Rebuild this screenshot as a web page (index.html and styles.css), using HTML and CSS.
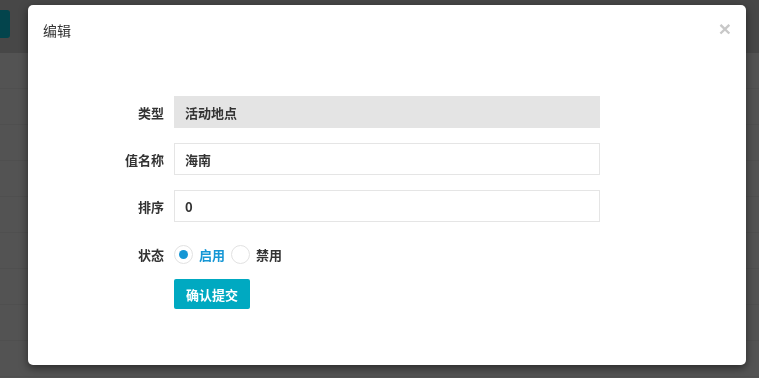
FILE: index.html
```html
<!DOCTYPE html>
<html>
<head>
  <meta charset="utf-8">
  <title>编辑</title>
  <link rel="stylesheet" href="styles.css">
</head>
<body>
  <div class="page">
    <div class="topbar">
      <div class="top-btn"></div>
    </div>
    <div class="list">
      <div class="list-row"></div>
      <div class="list-row"></div>
      <div class="list-row"></div>
      <div class="list-row"></div>
      <div class="list-row"></div>
      <div class="list-row"></div>
      <div class="list-row"></div>
      <div class="list-row"></div>
      <div class="list-row"></div>
    </div>
  </div>

  <div class="modal">
    <div class="modal-header">
      <h4 class="modal-title">编辑</h4>
      <span class="close">×</span>
    </div>
    <form class="form">
      <label class="form-label">类型</label>
      <div class="form-field">
        <input type="text" class="input input-disabled" value="活动地点" disabled>
      </div>

      <label class="form-label">值名称</label>
      <div class="form-field">
        <input type="text" class="input" value="海南">
      </div>

      <label class="form-label">排序</label>
      <div class="form-field">
        <input type="text" class="input" value="0">
      </div>

      <label class="form-label label-status">状态</label>
      <div class="form-field radios">
        <span class="radio checked"></span>
        <span class="radio-text active">启用</span>
        <span class="radio"></span>
        <span class="radio-text">禁用</span>
      </div>

      <div></div>
      <div class="form-field">
        <button type="button" class="btn-submit">确认提交</button>
      </div>
    </form>
  </div>
</body>
</html>
```

FILE: styles.css
```css
body {
  margin: 0;
  font-family: "Noto Sans CJK SC", "Liberation Sans", sans-serif;
  background-color: #535353;
  overflow: hidden;
}
.page {
  height: 378px;
}
.topbar {
  height: 53px;
  background-color: #474747;
  padding-top: 10px;
  box-sizing: border-box;
}
.top-btn {
  width: 10px;
  height: 28px;
  background-color: #03444c;
  border-radius: 0 3px 3px 0;
}
.list-row {
  height: 35px;
  border-bottom: 1px solid #4f4f4f;
}

.modal {
  position: fixed;
  top: 5px;
  left: 28px;
  width: 718px;
  height: 360px;
  background-color: #fff;
  border-radius: 5px;
  box-shadow: 0 3px 9px rgba(0, 0, 0, 0.5);
}
.modal-header {
  position: relative;
  padding: 15px;
}
.modal-title {
  margin: 0;
  font-size: 14px;
  font-weight: normal;
  line-height: 20px;
  color: #333;
}
.close {
  position: absolute;
  top: 14px;
  right: 15px;
  font-family: "Liberation Sans", sans-serif;
  font-size: 21px;
  font-weight: bold;
  line-height: 20px;
  color: #c8c8c8;
}

.form {
  display: grid;
  grid-template-columns: 136px 426px;
  column-gap: 10px;
  row-gap: 15px;
  margin-top: 41px;
  align-items: center;
}
.form-label {
  display: flex;
  align-items: center;
  justify-content: flex-end;
  font-size: 13px;
  font-weight: bold;
  color: #333;
}
.form-field {
  display: flex;
  align-items: center;
}
.input {
  width: 100%;
  height: 32px;
  box-sizing: border-box;
  padding: 0 10px;
  border: 1px solid #e5e5e5;
  font-family: "Noto Sans CJK SC", "Liberation Sans", sans-serif;
  font-size: 13px;
  font-weight: bold;
  color: #333;
  background-color: #fff;
  outline: none;
}
.input-disabled {
  background-color: #e4e4e4;
  border-color: #e4e4e4;
  color: #333;
  -webkit-text-fill-color: #333;
}
.label-status,
.radios {
  margin-top: 1px;
  height: 32px;
}
.radios {
  font-size: 13px;
  font-weight: bold;
}
.radio {
  width: 19px;
  height: 19px;
  border: 1px solid #e2e2e2;
  border-radius: 50%;
  box-sizing: border-box;
  display: flex;
  align-items: center;
  justify-content: center;
}
.radio.checked::after {
  content: "";
  width: 9px;
  height: 9px;
  border-radius: 50%;
  background-color: #1697d5;
}
.radio-text {
  margin-left: 6px;
  margin-right: 6px;
  color: #333;
}
.radio-text.active {
  color: #1697d5;
}
.btn-submit {
  margin-top: -6px;
  width: 76px;
  height: 30px;
  border: none;
  border-radius: 2px;
  background-color: #00a9c1;
  color: #fff;
  font-family: "Noto Sans CJK SC", "Liberation Sans", sans-serif;
  font-size: 13px;
  font-weight: bold;
  padding: 0;
  cursor: pointer;
}
```
